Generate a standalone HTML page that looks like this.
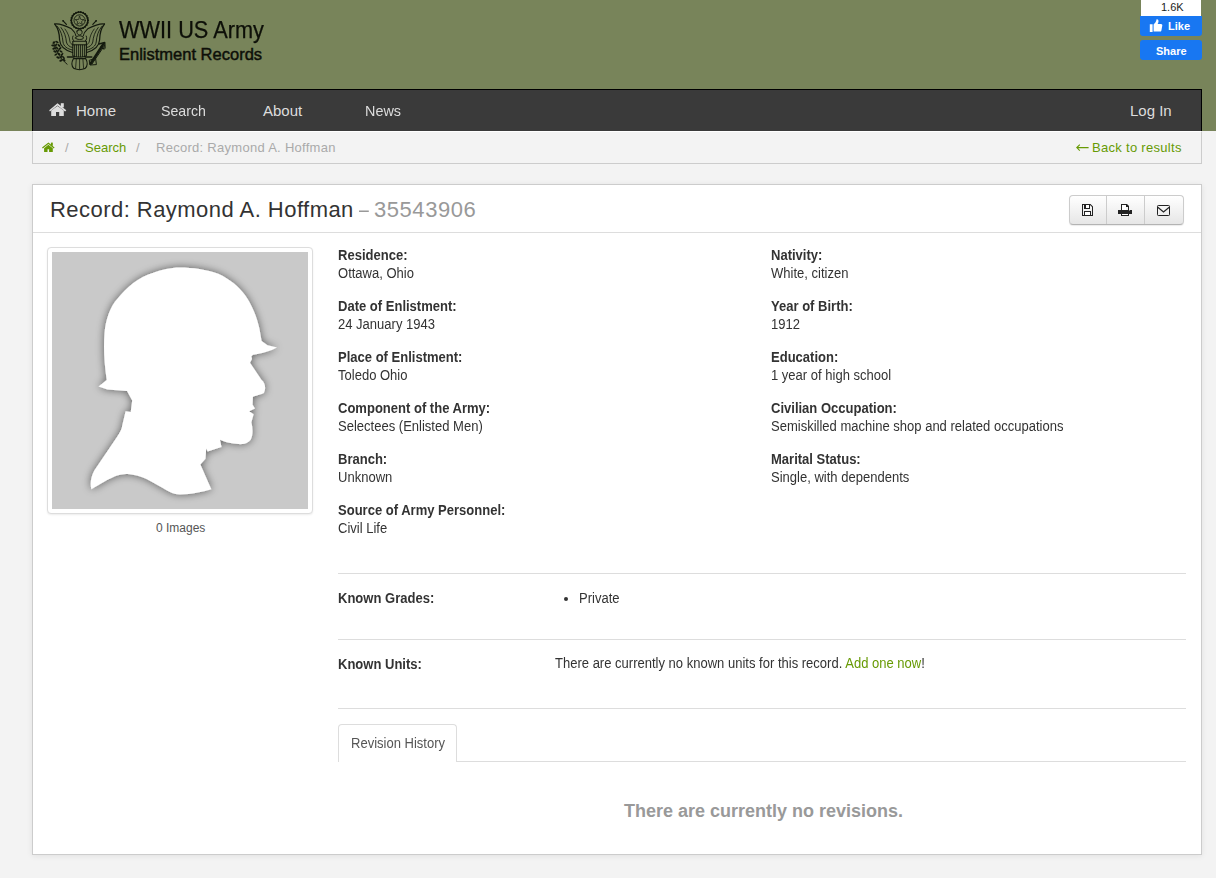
<!DOCTYPE html>
<html><head><meta charset="utf-8">
<style>
*{margin:0;padding:0;box-sizing:border-box}
html,body{width:1216px;height:878px;overflow:hidden;background:#f3f3f3;font-family:"Liberation Sans",sans-serif;color:#333;position:relative}
.a{position:absolute;white-space:nowrap}
#hdr{position:absolute;left:0;top:0;width:1216px;height:131px;background:#78845a}
#nav{position:absolute;left:32px;top:89px;width:1170px;height:42px;background:#3a3a3a;border:1px solid #000;border-bottom:none}
.nt{position:absolute;color:#ddd;font-size:15px;line-height:15px;top:103px}
#bc{position:absolute;left:32px;top:131px;width:1170px;height:33px;background:#f3f3f3;border:1px solid #ccc;border-top:1px solid #fff}
.bt{position:absolute;font-size:13px;line-height:13px;top:141px}
.green{color:#679a04}
#card{position:absolute;left:32px;top:184px;width:1170px;height:671px;background:#fff;border:1px solid #ccc;box-shadow:0 1px 6px rgba(0,0,0,.08)}
#chd{position:absolute;left:33px;top:232px;width:1168px;height:1px;background:#ddd}
.lbl{position:absolute;font-size:14px;font-weight:bold;line-height:18px;color:#333;transform:scaleX(.93);transform-origin:0 0;white-space:nowrap}
.val{position:absolute;font-size:14px;line-height:18px;color:#333;transform:scaleX(.93);transform-origin:0 0;white-space:nowrap}
.hr{position:absolute;left:338px;width:848px;height:1px;background:#ddd}
</style></head><body>
<div id="hdr"></div>
<!-- logo -->
<svg class="a" style="left:48px;top:6px" width="64" height="66" viewBox="48 6 64 66">
<g fill="none" stroke="#141a0e" stroke-linecap="round" stroke-linejoin="round">
<circle cx="79.6" cy="20.4" r="8.3" stroke-width="1.3"/>
<circle cx="79.6" cy="20.4" r="5.6" stroke-width="0.9"/>
<path d="M79.6 16.2 L80.8 19.4 L84 19.6 L81.5 21.6 L82.3 24.6 L79.6 22.9 L76.9 24.6 L77.7 21.6 L75.2 19.6 L78.4 19.4 Z" stroke-width="0.7"/>
<g id="lw">
<path d="M54.7 24 C58 23.5 64 25 71.5 28.8 C74 31 75.5 33 76 36" stroke-width="1.1"/>
<path d="M54.7 24 C58 28 59.5 33 59.6 40 C60 46 64 50 72.5 52.5" stroke-width="1.2"/>
<path d="M57.5 26.5 C61 31 62.5 36 63 42 C63.5 46 67 49 72.5 50" stroke-width="0.9"/>
<path d="M61 27.5 C64.5 32 66 37 66.4 42 C67 45 69.5 47 72.5 47.5" stroke-width="0.9"/>
<path d="M65 29 C68 33 69.4 37 69.8 41 C70 43 71.5 44.5 73 45" stroke-width="0.8"/>
<path d="M73 36 C72 38 72.5 40 74 41" stroke-width="1"/>
<path d="M67.5 57 L74 57" stroke-width="1.6"/>
</g>
<use href="#lw" transform="translate(159.2 0) scale(-1 1)"/>
<path d="M63.1 20.8 L66.4 24.4" stroke-width="1.2"/>
<path d="M96.1 20.8 L92.8 24.4" stroke-width="1.2"/>
<path d="M67.1 64.2 C62 60 56 53 53.5 42" stroke-width="1"/>
<path d="M90.6 63.6 L103.6 43.6" stroke-width="2.6"/><path d="M92 64 L104.5 45.5" stroke-width="1"/>
<path d="M89.6 60.2 L95.6 58.4 L96.4 64.6 L90.4 65 Z" stroke-width="1"/>
<path d="M99 44 L104.8 42.4 L105 48 M101 47 L104 49" stroke-width="1.3"/>
<path d="M72.8 41.2 H86.4 V55.6 C84 57.5 75 57.5 72.8 55.6 Z" stroke-width="1.1"/>
<path d="M72.8 44.8 H86.4" stroke-width="1"/>
<path d="M74.6 45 V56 M76.6 45 V56.6 M78.6 45 V56.8 M80.6 45 V56.8 M82.6 45 V56.6 M84.6 45 V56" stroke-width="0.9"/>
<path d="M75.5 38 C76.5 35 82.5 35 83.6 38 C83 40 76 40 75.5 38 Z" stroke-width="1"/>
<path d="M77 31 C78 29.5 81 29.5 82 31 C82.5 33 81.5 35 79.6 35 C77.7 35 76.5 33 77 31 Z" stroke-width="1"/>
<path d="M73.5 58.6 H85.7 C87.5 62 88 66 85 68.6 C82 69.8 77 69.8 74 68.6 C71 66 71.6 62 73.5 58.6 Z" stroke-width="1.1"/>
<path d="M76.3 59 L75.6 68.4 M79.6 59 V69.2 M82.9 59 L83.6 68.4" stroke-width="0.8"/>
</g>
<g fill="#141a0e"><circle cx="88.00" cy="20.40" r="1.05"/><circle cx="87.66" cy="22.77" r="1.05"/><circle cx="86.67" cy="24.94" r="1.05"/><circle cx="85.10" cy="26.75" r="1.05"/><circle cx="83.09" cy="28.04" r="1.05"/><circle cx="80.80" cy="28.71" r="1.05"/><circle cx="78.40" cy="28.71" r="1.05"/><circle cx="76.11" cy="28.04" r="1.05"/><circle cx="74.10" cy="26.75" r="1.05"/><circle cx="72.53" cy="24.94" r="1.05"/><circle cx="71.54" cy="22.77" r="1.05"/><circle cx="71.20" cy="20.40" r="1.05"/><circle cx="71.54" cy="18.03" r="1.05"/><circle cx="72.53" cy="15.86" r="1.05"/><circle cx="74.10" cy="14.05" r="1.05"/><circle cx="76.11" cy="12.76" r="1.05"/><circle cx="78.40" cy="12.09" r="1.05"/><circle cx="80.80" cy="12.09" r="1.05"/><circle cx="83.09" cy="12.76" r="1.05"/><circle cx="85.10" cy="14.05" r="1.05"/><circle cx="86.67" cy="15.86" r="1.05"/><circle cx="87.66" cy="18.03" r="1.05"/><circle cx="63.1" cy="20.8" r="0.9"/><circle cx="96.1" cy="20.8" r="0.9"/><ellipse cx="54" cy="42.5" rx="1.8" ry="0.95" transform="rotate(-30 54 42.5)"/><ellipse cx="57" cy="42" rx="1.8" ry="0.95" transform="rotate(30 57 42)"/><ellipse cx="53" cy="45.5" rx="1.8" ry="0.95" transform="rotate(10 53 45.5)"/><ellipse cx="56" cy="45" rx="1.8" ry="0.95" transform="rotate(-50 56 45)"/><ellipse cx="59" cy="45.5" rx="1.8" ry="0.95" transform="rotate(40 59 45.5)"/><ellipse cx="54" cy="48.5" rx="1.8" ry="0.95" transform="rotate(-20 54 48.5)"/><ellipse cx="57" cy="48" rx="1.8" ry="0.95" transform="rotate(50 57 48)"/><ellipse cx="60" cy="48.5" rx="1.8" ry="0.95" transform="rotate(-40 60 48.5)"/><ellipse cx="55" cy="51.5" rx="1.8" ry="0.95" transform="rotate(20 55 51.5)"/><ellipse cx="58" cy="51" rx="1.8" ry="0.95" transform="rotate(-50 58 51)"/><ellipse cx="61" cy="51.5" rx="1.8" ry="0.95" transform="rotate(30 61 51.5)"/><ellipse cx="56" cy="54.5" rx="1.8" ry="0.95" transform="rotate(-30 56 54.5)"/><ellipse cx="59" cy="54" rx="1.8" ry="0.95" transform="rotate(40 59 54)"/><ellipse cx="62" cy="54.5" rx="1.8" ry="0.95" transform="rotate(-50 62 54.5)"/><ellipse cx="58" cy="57.5" rx="1.8" ry="0.95" transform="rotate(20 58 57.5)"/><ellipse cx="61" cy="57" rx="1.8" ry="0.95" transform="rotate(-40 61 57)"/><ellipse cx="63.5" cy="57.5" rx="1.8" ry="0.95" transform="rotate(50 63.5 57.5)"/><ellipse cx="61" cy="60.5" rx="1.8" ry="0.95" transform="rotate(-20 61 60.5)"/><ellipse cx="64" cy="60" rx="1.8" ry="0.95" transform="rotate(40 64 60)"/></g>
</svg>
<div class="a" id="t1" style="left:119px;top:17px;font-size:23px;line-height:26px;color:#0d0f08;-webkit-text-stroke:.25px #0d0f08;transform:scaleX(.945);transform-origin:0 0">WWII US Army</div>
<div class="a" id="t2" style="left:119px;top:45px;font-size:16.5px;line-height:18px;color:#0d0f08;-webkit-text-stroke:.45px #0d0f08">Enlistment Records</div>

<!-- fb -->
<div class="a" style="left:1141px;top:0;width:60px;height:16px;background:#fff"></div>
<div class="a" style="left:1161px;top:1px;font-size:11px;line-height:12px;color:#1c1e21">1.6K</div>
<div class="a" style="left:1140px;top:16px;width:62px;height:20px;background:#1877f2;border-radius:0 0 3px 3px"></div>
<svg class="a" style="left:1148px;top:18px" width="16" height="16" viewBox="0 0 16 16"><path fill="#fff" d="M1.8 6.2 H4.6 V14 H1.8 Z M5.6 6.4 C7.2 5.2 8.2 3.6 8.6 1.3 C9.6 1 10.6 1.8 10.5 3.4 C10.4 4.4 10 5.2 9.6 6 H13 C13.9 6 14.5 6.8 14.3 7.6 L13.4 12.4 C13.2 13.2 12.6 13.6 11.9 13.6 H5.6 Z"/></svg>
<div class="a" style="left:1168px;top:20px;font-size:11px;font-weight:bold;line-height:12px;color:#fff">Like</div>
<div class="a" style="left:1140px;top:40px;width:62px;height:20px;background:#1877f2;border-radius:3px"></div>
<div class="a" style="left:1156px;top:45px;font-size:11px;font-weight:bold;line-height:12px;color:#fff">Share</div>

<div id="nav"></div>
<svg class="a" style="left:46px;top:100px" width="24" height="20" viewBox="46 100 24 20">
<g fill="#ddd">
<path d="M49.2 110.3 L57.5 103.2 L66.3 110.3 L65.1 111.6 L57.5 105.4 L49.9 111.6 Z"/>
<rect x="60.8" y="103.2" width="3" height="4.2"/>
<path d="M51.2 116 V110.6 L57.5 105.9 L63.8 110.6 V116 H59.2 V112 H56 V116 Z"/>
</g></svg>
<div class="nt" style="left:76px">Home</div>
<div class="nt" style="left:161px;transform:scaleX(.945);transform-origin:0 0">Search</div>
<div class="nt" style="left:263px">About</div>
<div class="nt" style="left:365px;transform:scaleX(.96);transform-origin:0 0">News</div>
<div class="nt" style="left:1130px">Log In</div>

<div id="bc"></div>
<svg class="a" style="left:40px;top:138px" width="18" height="18" viewBox="40 138 18 18">
<g fill="#679a04">
<path d="M42 147.6 L48.4 142.4 L54.6 147.6 L53.8 148.5 L48.4 144.1 L42.8 148.5 Z"/>
<rect x="50.9" y="142.6" width="1.9" height="3.2"/>
<path d="M44.1 152 V148.2 L48.4 144.8 L52.8 148.2 V152 H49.1 V149.2 H47.5 V152 Z"/>
</g></svg>
<div class="bt green" style="left:85px">Search</div>
<div class="bt" style="left:65px;color:#aaa">/</div>
<div class="bt" style="left:136px;color:#aaa">/</div>
<div class="bt" style="left:156px;color:#aaa;letter-spacing:.28px">Record: Raymond A. Hoffman</div>
<svg class="a" style="left:1074px;top:140px" width="18" height="16" viewBox="1074 140 18 16"><path d="M1076.6 147.6 H1088.6 M1079.8 144.6 L1076.8 147.6 L1079.8 150.6" fill="none" stroke="#679a04" stroke-width="1.1"/></svg>
<div class="bt green" style="left:1092px;letter-spacing:.3px">Back to results</div>

<div id="card"></div>
<div id="chd"></div>
<div class="a" style="left:50px;top:198px;font-size:22px;line-height:24px;color:#333;letter-spacing:.46px">Record: Raymond A. Hoffman</div>
<div class="a" style="left:359px;top:198px;font-size:22px;line-height:24px;color:#999;transform:scaleX(.8);transform-origin:0 0">–</div>
<div class="a" style="left:374px;top:198px;font-size:22px;line-height:24px;color:#999;letter-spacing:.55px">35543906</div>

<!-- btn group -->
<div class="a" style="left:1069px;top:195px;width:115px;height:30px;border:1px solid #ccc;border-bottom-color:#b3b3b3;border-radius:4px;background:linear-gradient(#fff,#e6e6e6);box-shadow:0 1px 1px rgba(0,0,0,.08)"></div>
<div class="a" style="left:1106px;top:196px;width:1px;height:28px;background:#ccc"></div>
<div class="a" style="left:1144px;top:196px;width:1px;height:28px;background:#ccc"></div>
<svg class="a" style="left:1078px;top:200px" width="100" height="20" viewBox="1078 200 100 20" shape-rendering="crispEdges">
<g fill="#222">
<path d="M1082 204 H1090.5 L1093 206.5 V216 H1082 Z M1083 205 V215 H1084 V211 H1091 V215 H1092 V207 L1090 205 V209 H1084 V205 Z" fill-rule="evenodd" shape-rendering="auto"/>
<path d="M1086 205 H1089 V208 H1086 Z" fill="#fff"/>
<path d="M1085 212 H1090 V215 H1085 Z" fill="#fff"/>
<path d="M1121 204 H1127 L1129 206 V210 H1128 V207 H1126 V205 H1122 V210 H1121 Z" shape-rendering="auto"/>
<rect x="1118" y="210" width="14" height="4"/>
<path d="M1121 213 H1122 V215 H1128 V213 H1129 V216 H1121 Z"/>
</g>
<rect x="1122" y="205" width="4" height="5" fill="#fff"/>
<rect x="1122" y="214" width="6" height="1" fill="#fff"/>
<rect x="1129" y="210" width="1" height="1" fill="#888"/>
<g fill="none" stroke="#222" stroke-width="1" shape-rendering="auto">
<rect x="1157.5" y="205.5" width="12" height="10" rx="0.8"/>
<path d="M1157.8 207.3 L1163.5 212 L1169.2 207.3" stroke-width="1.15"/>
</g>
</svg>
<!-- thumbnail -->
<div class="a" style="left:47px;top:247px;width:266px;height:267px;border:1px solid #ddd;border-radius:4px;background:#fff;box-shadow:0 1px 2px rgba(0,0,0,.075)"></div>
<svg class="a" style="left:52px;top:252px" width="256" height="257" viewBox="0 0 256 257">
<defs><filter id="sh" x="-20%" y="-20%" width="140%" height="140%"><feGaussianBlur in="SourceAlpha" stdDeviation="4.5"/><feComponentTransfer><feFuncA type="linear" slope="0.55"/></feComponentTransfer><feMerge><feMergeNode/><feMergeNode in="SourceGraphic"/></feMerge></filter></defs>
<rect width="256" height="257" fill="#c9c9c9"/>
<path filter="url(#sh)" fill="#fff" d="M128 15.5 C140 15.5 155 17.5 166.2 21.8 C178 27 187 35 193 43 C200 53 205 65 207.5 77 L209.6 88.9 L215.5 93.3 L225 95.5 C220 98.5 210 101.5 201 102.8 L199.4 104.2 L200 107 L198 110.8 L209.6 128 C213.5 131 214 137 211.8 141.1 C208 143 203 144 200.9 144.8 L200.6 152.8 L203 156.4 L197.2 159.3 L201.6 162.3 L199.4 170.3 C201 177 201 183 198.7 187.8 C196 191 193 192 190.7 192.1 C185 192.5 175 191 168 187.8 L169.5 195 L155.7 199.4 L154.2 196.5 L153.5 206.7 L148.4 212.5 L159.3 237.3 C150 240 140 242.4 128 242.4 C120 242 115 238.5 110.8 235.9 C100 230 90 223 75.8 222 C65 222 58 226 39.4 237.3 C38 233 38.5 225 42.3 218.4 L64.1 186.3 C68 181 70 176 70 174.6 L73.6 159.3 L78.7 160 L80.2 148.4 L75 139 L55.4 137.5 L46.6 134.6 L54.7 128 C52 110 51.5 95 52.5 81.6 C53.5 68 58 55 65.6 46.6 C74 36 86 25 102 20.4 C110 18 118 15.5 128 15.5 Z"/>
</svg>
<div class="a" style="left:156px;top:521px;font-size:12px;line-height:14px;color:#555">0 Images</div>

<!-- fields -->
<div class="lbl" style="left:338px;top:246px">Residence:</div>
<div class="val" style="left:338px;top:264px">Ottawa, Ohio</div>
<div class="lbl" style="left:338px;top:297px">Date of Enlistment:</div>
<div class="val" style="left:338px;top:315px">24 January 1943</div>
<div class="lbl" style="left:338px;top:348px">Place of Enlistment:</div>
<div class="val" style="left:338px;top:366px">Toledo Ohio</div>
<div class="lbl" style="left:338px;top:399px">Component of the Army:</div>
<div class="val" style="left:338px;top:417px">Selectees (Enlisted Men)</div>
<div class="lbl" style="left:338px;top:450px">Branch:</div>
<div class="val" style="left:338px;top:468px">Unknown</div>
<div class="lbl" style="left:338px;top:501px">Source of Army Personnel:</div>
<div class="val" style="left:338px;top:519px">Civil Life</div>

<div class="lbl" style="left:771px;top:246px">Nativity:</div>
<div class="val" style="left:771px;top:264px">White, citizen</div>
<div class="lbl" style="left:771px;top:297px">Year of Birth:</div>
<div class="val" style="left:771px;top:315px">1912</div>
<div class="lbl" style="left:771px;top:348px">Education:</div>
<div class="val" style="left:771px;top:366px">1 year of high school</div>
<div class="lbl" style="left:771px;top:399px">Civilian Occupation:</div>
<div class="val" style="left:771px;top:417px">Semiskilled machine shop and related occupations</div>
<div class="lbl" style="left:771px;top:450px">Marital Status:</div>
<div class="val" style="left:771px;top:468px">Single, with dependents</div>

<div class="hr" style="top:573px"></div>
<div class="lbl" style="left:338px;top:589px;font-size:14px;transform:scaleX(.93);transform-origin:0 0">Known Grades:</div>
<div class="a" style="left:564px;top:597px;width:4.4px;height:4.4px;border-radius:50%;background:#333"></div>
<div class="val" style="left:579px;top:589px">Private</div>
<div class="hr" style="top:639px"></div>
<div class="lbl" style="left:338px;top:655px;font-size:14px;transform:scaleX(.93);transform-origin:0 0">Known Units:</div>
<div class="val" style="left:555px;top:654px">There are currently no known units for this record. <span class="green">Add one now</span>!</div>
<div class="hr" style="top:708px"></div>

<div class="a" style="left:338px;top:724px;width:119px;height:38px;border:1px solid #ddd;border-bottom:none;border-radius:4px 4px 0 0;background:#fff"></div>
<div class="hr" style="top:761px;left:457px;width:729px"></div>
<div class="a" style="left:351px;top:735px;font-size:14px;line-height:16px;color:#555;transform:scaleX(.93);transform-origin:0 0">Revision History</div>
<div class="a" style="left:624px;top:801px;font-size:18px;font-weight:bold;line-height:20px;color:#999">There are currently no revisions.</div>
</body></html>
